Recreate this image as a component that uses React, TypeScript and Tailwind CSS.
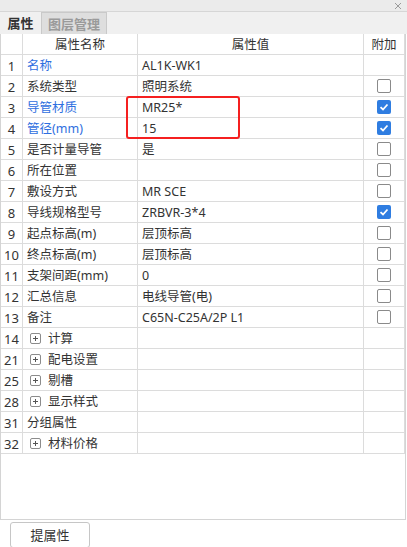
import React from "react";

type Row = {
  no: number;
  name: string;
  value?: string;
  blue?: boolean;
  group?: boolean;
  check?: "on" | "off";
};

const rows: Row[] = [
  { no: 1, name: "名称", value: "AL1K-WK1", blue: true },
  { no: 2, name: "系统类型", value: "照明系统", check: "off" },
  { no: 3, name: "导管材质", value: "MR25*", blue: true, check: "on" },
  { no: 4, name: "管径(mm)", value: "15", blue: true, check: "on" },
  { no: 5, name: "是否计量导管", value: "是", check: "off" },
  { no: 6, name: "所在位置", value: "", check: "off" },
  { no: 7, name: "敷设方式", value: "MR SCE", check: "off" },
  { no: 8, name: "导线规格型号", value: "ZRBVR-3*4", check: "on" },
  { no: 9, name: "起点标高(m)", value: "层顶标高", check: "off" },
  { no: 10, name: "终点标高(m)", value: "层顶标高", check: "off" },
  { no: 11, name: "支架间距(mm)", value: "0", check: "off" },
  { no: 12, name: "汇总信息", value: "电线导管(电)", check: "off" },
  { no: 13, name: "备注", value: "C65N-C25A/2P L1", check: "off" },
  { no: 14, name: "计算", group: true },
  { no: 21, name: "配电设置", group: true },
  { no: 25, name: "剔槽", group: true },
  { no: 28, name: "显示样式", group: true },
  { no: 31, name: "分组属性" },
  { no: 32, name: "材料价格", group: true },
];

const cell = "h-[21px] border-b border-r border-[#dcdcdc] flex items-center";
const txt = "pt-[2px]";

const CheckBox = ({ on }: { on: boolean }) =>
  on ? (
    <span className="w-[14px] h-[14px] rounded-[2px] bg-[#2f7de1] flex items-center justify-center">
      <svg width="10" height="10" viewBox="0 0 10 10">
        <path d="M1.5 5.2 L4 7.5 L8.5 2.5" fill="none" stroke="#fff" strokeWidth="1.8" />
      </svg>
    </span>
  ) : (
    <span className="w-[14px] h-[14px] rounded-[2px] border border-[#8a8a8a] bg-white" />
  );

const PlusBox = () => (
  <span className="w-[11px] h-[11px] border border-[#8c8c8c] rounded-[2px] flex items-center justify-center mr-[7px] ml-[3px]">
    <svg width="7" height="7" viewBox="0 0 7 7">
      <path d="M3.5 1 V6 M1 3.5 H6" stroke="#555" strokeWidth="1" />
    </svg>
  </span>
);

export default function App() {
  return (
    <div className="w-[407px] h-[547px] bg-white text-[12.5px] text-[#333] font-['Noto_Sans','Noto_Sans_CJK_SC',sans-serif] leading-none relative overflow-hidden">
      {/* 标题栏 */}
      <div className="h-[12px] bg-[#ebebeb] border-b border-[#d6d6d6] flex justify-end items-center pr-[5px]">
        <svg width="8" height="8" viewBox="0 0 8 8">
          <path d="M1 1 L7 7 M7 1 L1 7" stroke="#9a9a9a" strokeWidth="1" />
        </svg>
      </div>

      {/* 页签 */}
      <div className="h-[22px] bg-[#f0f0f0] flex items-end">
        <div className="w-[41px] h-[22px] flex items-center justify-center pt-[1px] font-bold text-[#333] text-[13px]">属性</div>
        <div className="w-[66px] h-[22px] flex items-center justify-center pt-[1px] bg-[#dedede] border border-[#c9c9c9] border-b-0 text-[#9a9a9a] font-bold text-[13px]">
          图层管理
        </div>
      </div>

      {/* 属性表 */}
      <div className="w-[406px] h-[486px] border border-t-0 border-[#d4d4d4] bg-white">
        <div className="grid grid-cols-[22px_115px_226px_41px]">
          <div className={cell} />
          <div className={`${cell} ${txt} justify-center`}>属性名称</div>
          <div className={`${cell} ${txt} justify-center`}>属性值</div>
          <div className={`${cell} ${txt} justify-center`}>附加</div>

          {rows.map((r) => (
            <React.Fragment key={r.no}>
              <div className={`${cell} ${txt} justify-center text-[13px]`}>{r.no}</div>
              <div className={`${cell} pl-[4px] ${r.blue ? "text-[#2f6fe0]" : ""}`}>
                {r.group && <PlusBox />}
                <span className={txt}>{r.name}</span>
              </div>
              <div className={`${cell} ${txt} pl-[4px]`}>{r.value}</div>
              <div className={`${cell} justify-center`}>
                {r.check && <CheckBox on={r.check === "on"} />}
              </div>
            </React.Fragment>
          ))}
        </div>
      </div>

      {/* 高亮框 */}
      <div className="absolute left-[126px] top-[96px] w-[114px] h-[43px] border-2 border-[#f52020] rounded-[3px]" />

      {/* 底部按钮 */}
      <div className="pl-[10px] pt-[2px]">
        <button className="w-[80px] h-[26px] border border-[#c6c6c6] rounded-[3px] bg-white text-[13px] text-[#333]">
          提属性
        </button>
      </div>
    </div>
  );
}
